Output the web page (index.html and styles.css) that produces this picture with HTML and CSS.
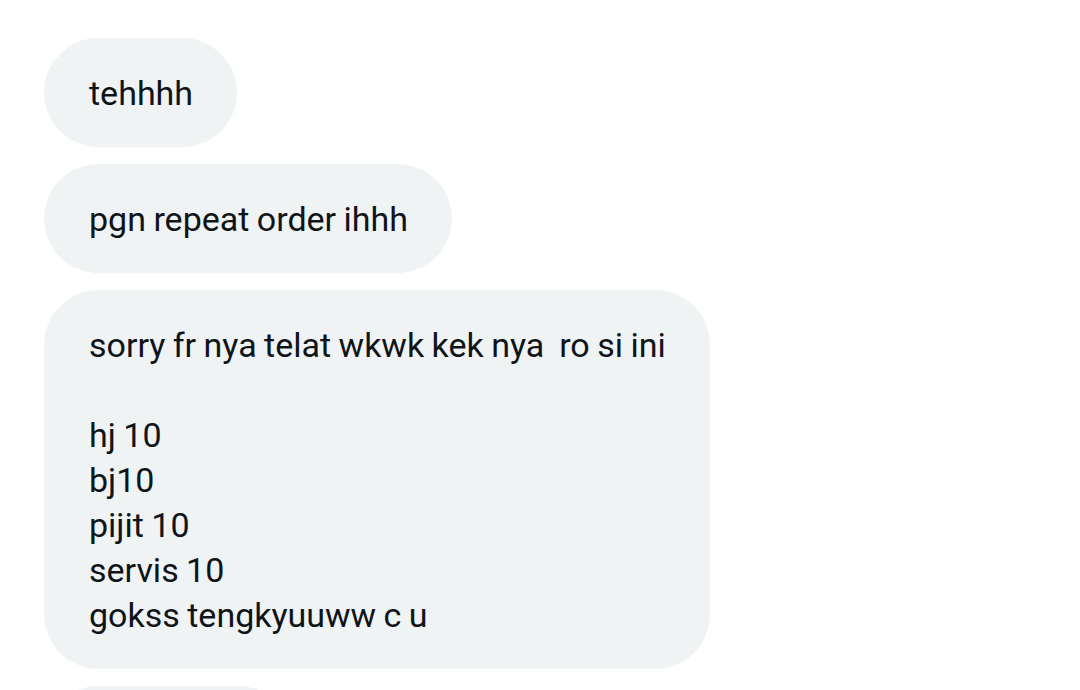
FILE: index.html
```html
<!DOCTYPE html>
<html>
<head>
<meta charset="utf-8">
<link rel="stylesheet" href="styles.css">
</head>
<body>
<div class="thread">
  <div class="bubble">tehhhh</div>
  <div class="bubble">pgn repeat order ihhh</div>
  <div class="bubble multi">sorry fr nya telat wkwk kek nya  ro si ini

hj 10
bj10
pijit 10
servis 10
gokss tengkyuuww c u</div>
  <div class="bubble next">&nbsp;</div>
</div>
</body>
</html>
```

FILE: styles.css
```css
html, body {
  margin: 0;
  padding: 0;
  background: #ffffff;
  overflow: hidden;
}
body {
  width: 1080px;
  height: 690px;
  font-family: "Roboto", "Liberation Sans", sans-serif;
  color: #0f1419;
}
.thread {
  display: flex;
  flex-direction: column;
  align-items: flex-start;
  gap: 17px;
  padding: 38px 0 0 44px;
}
.bubble {
  background: #eff3f4;
  border-radius: 55px;
  padding: 33px 44px 31px 45px;
  font-size: 34px;
  line-height: 45px;
  white-space: pre-wrap;
  letter-spacing: 0;
  word-spacing: -1px;
}
.next {
  width: 160px;
}
```
